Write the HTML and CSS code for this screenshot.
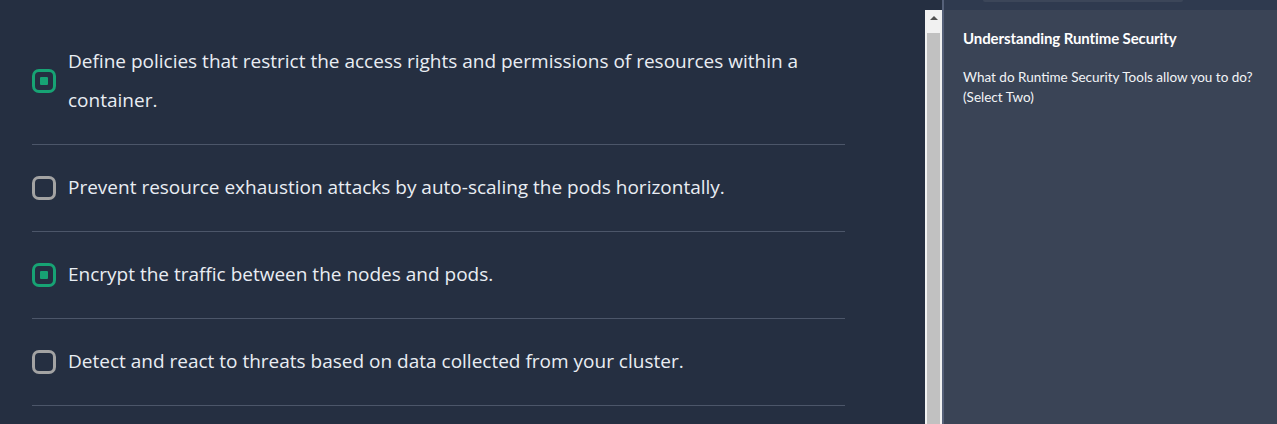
FILE: index.html
```html
<!DOCTYPE html>
<html>
<head>
<meta charset="utf-8">
<link rel="stylesheet" href="styles.css">
</head>
<body>
<div class="app">
  <main class="main">
    <ul class="options">
      <li class="option">
        <span class="box checked"><span class="dot"></span></span>
        <span class="label">Define policies that restrict the access rights and permissions of resources within a container.</span>
      </li>
      <li class="option">
        <span class="box"></span>
        <span class="label">Prevent resource exhaustion attacks by auto-scaling the pods horizontally.</span>
      </li>
      <li class="option">
        <span class="box checked"><span class="dot"></span></span>
        <span class="label">Encrypt the traffic between the nodes and pods.</span>
      </li>
      <li class="option">
        <span class="box"></span>
        <span class="label">Detect and react to threats based on data collected from your cluster.</span>
      </li>
    </ul>
  </main>
  <div class="scrollcol">
    <div class="scroll-gap"></div>
    <div class="scrollbar">
      <div class="arrow"><span class="tri"></span></div>
      <div class="thumb"></div>
    </div>
  </div>
  <aside class="side">
    <div class="side-top"><div class="pill"></div></div>
    <div class="side-body">
      <h2 class="title">Understanding Runtime Security</h2>
      <p class="question">What do Runtime Security Tools allow you to do?<br>(Select Two)</p>
    </div>
  </aside>
</div>
</body>
</html>
```
FILE: styles.css
```css
* { box-sizing: border-box; }
html, body { margin: 0; padding: 0; height: 100%; }
body { background: #252f41; overflow: hidden; }
.app { display: flex; height: 424px; }
.main { width: 925px; flex: none; padding: 19px 0 0 32px; }
.options { list-style: none; margin: 0; padding: 0; width: 813px; }
.option {
  display: flex; align-items: center; gap: 12px;
  padding: 23px 0 24px 0;
  border-bottom: 1px solid #4c5669;
  font-family: "Open Sans", sans-serif; font-size: 19px; line-height: 39px;
  color: #e9edf3;
}
.box {
  flex: none; width: 24px; height: 24px; border-radius: 7px;
  border: 3px solid #a3a3a3;
  display: flex; align-items: center; justify-content: center;
}
.box.checked { border-color: #17a374; }
.dot { width: 8px; height: 8px; background: #17a374; border-radius: 1px; }
.label { flex: 1; }
.scrollcol { width: 17px; flex: none; display: flex; flex-direction: column; }
.scroll-gap { height: 10px; background: #252f41; }
.scrollbar { flex: 1; background: #f1f1f1; display: flex; flex-direction: column; align-items: center; }
.arrow { height: 23px; width: 100%; display: flex; justify-content: center; padding-top: 6px; }
.tri { width: 0; height: 0; border-left: 4px solid transparent; border-right: 4px solid transparent; border-bottom: 4px solid #505050; }
.thumb { width: 13px; flex: 1; background: #c1c1c1; }
.side { flex: 1; display: flex; flex-direction: column; border-left: 2px solid #566179; background: #3a4456; }
.side-top { height: 10px; background: #2f3a4f; padding-left: 39px; }
.pill { width: 200px; height: 2px; background: #3c4659; border-radius: 0 0 3px 3px; }
.side-body { padding: 19px 18px 0 19px; font-family: "Lato", sans-serif; color: #ffffff; }
.title { margin: 0; font-size: 15px; font-weight: 700; line-height: 18px; letter-spacing: -0.1px; }
.question { margin: 20px 0 0 0; font-size: 13.5px; line-height: 20px; letter-spacing: 0; color: #f2f4f7; }
```
